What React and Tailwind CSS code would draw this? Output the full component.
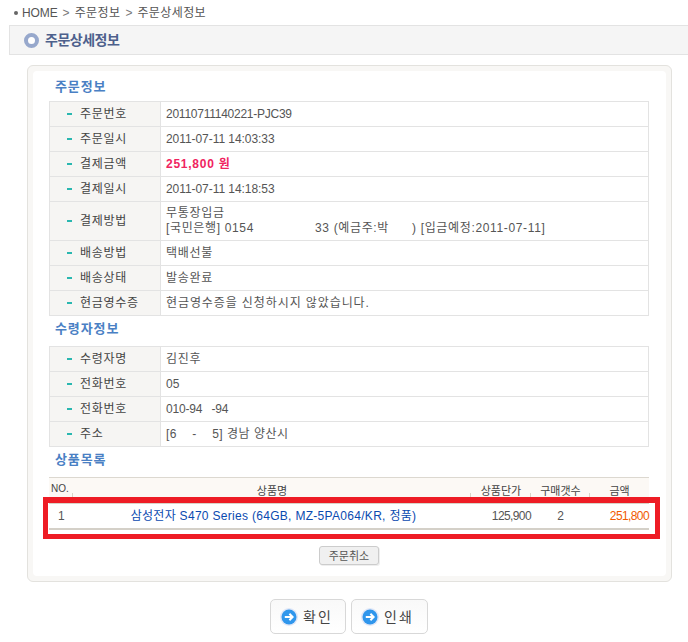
const FF = "font-['Liberation_Sans','Noto_Sans_CJK_KR',sans-serif]";

function Row({ label, children, tall }) {
  return (
    <div className={`flex border-b border-[#e3e3e3] ${tall ? "h-[39px]" : "h-[25px]"}`}>
      <div className="w-[111px] shrink-0 flex items-center bg-[#f6f5f3] border-r border-[#e3e3e3] pl-[17px]">
        <span className="w-[5px] h-[2px] bg-[#2ab7b0] mr-[8px]"></span>
        <span className="text-[#444] tracking-[0.7px]">{label}</span>
      </div>
      <div className="flex-1 flex items-center pl-[5px] text-[#555]">{children}</div>
    </div>
  );
}

function Heading({ children, className }) {
  return <div className={`pl-[6px] text-[13px] font-bold text-[#4a80c4] tracking-[0.9px] leading-[16px] ${className}`}>{children}</div>;
}

function Sep() {
  return <span className="absolute right-0 bottom-0 w-px h-[10px] bg-[#d8d4c8]"></span>;
}

function Arrow() {
  return (
    <svg width="18" height="18" viewBox="0 0 18 18" className="shrink-0">
      <circle cx="9" cy="9" r="9" fill="#dfe6f7" />
      <circle cx="9" cy="9" r="7.5" fill="#2f96ec" />
      <path d="M4.8 9H12.4M9.4 5.8L12.6 9L9.4 12.2" fill="none" stroke="#fff" strokeWidth="2" />
    </svg>
  );
}

function BigButton({ label, className }) {
  return (
    <div className={`h-[35px] flex items-center pl-[9px] gap-[5px] rounded-[5px] border border-[#d8d8d8] bg-gradient-to-b from-[#f9f9f9] to-[#ffffff] text-[14px] text-[#444] tracking-[2px] ${className}`}>
      <Arrow />
      <span>{label}</span>
    </div>
  );
}

export default function App() {
  return (
    <div className={`relative w-[688px] h-[642px] overflow-hidden bg-white text-[12px] leading-[14px] ${FF}`}>
      <div className="h-[25px] flex items-center pl-[14px] text-[#555]">
        <span className="w-[4px] h-[4px] rounded-full bg-[#666] mr-[4px]"></span>
        <span className="tracking-[-0.1px]">HOME</span>
        <span className="mx-[5px] text-[#777]">&gt;</span>
        <span className="tracking-[0.4px]">주문정보</span>
        <span className="mx-[5px] text-[#777]">&gt;</span>
        <span className="tracking-[0.4px]">주문상세정보</span>
      </div>

      <div className="ml-[9px] h-[30px] flex items-center pl-[14px] gap-[6px] bg-[#f5f5f5] border border-r-0 border-[#e3e3e3]">
        <span className="w-[15px] h-[15px] rounded-full border-[4px] border-[#97a8cc] bg-white"></span>
        <span className="text-[14px] font-bold text-[#4d608c] tracking-[-0.5px]">주문상세정보</span>
      </div>

      <div className="ml-[27px] mt-[10px] w-[645px] h-[517px] rounded-[6px] border border-[#e3e2de] bg-[#f8f7f5] p-[5px]">
        <div className="h-full rounded-[4px] bg-white px-[16px]">
          <Heading className="pt-[8px] h-[30px]">주문정보</Heading>
          <div className="w-[600px] border-t border-x border-[#e3e3e3]">
            <Row label="주문번호"><span className="tracking-[-0.25px]">20110711140221-PJC39</span></Row>
            <Row label="주문일시"><span className="tracking-[-0.06px]">2011-07-11 14:03:33</span></Row>
            <Row label="결제금액"><span className="font-bold text-[#f0245f] tracking-[0.75px]">251,800 원</span></Row>
            <Row label="결제일시"><span className="tracking-[-0.06px]">2011-07-11 14:18:53</span></Row>
            <Row label="결제방법" tall>
              <div className="leading-[15px]">
                <div className="tracking-[0.7px]">무통장입금</div>
                <div className="flex tracking-[0.65px]">
                  <span>[국민은행] 0154</span>
                  <span className="ml-[61px]">33 (예금주:박</span>
                  <span className="ml-[23px]">) [입금예정:2011-07-11]</span>
                </div>
              </div>
            </Row>
            <Row label="배송방법"><span className="tracking-[0.7px]">택배선불</span></Row>
            <Row label="배송상태"><span className="tracking-[0.7px]">발송완료</span></Row>
            <Row label="현금영수증"><span className="tracking-[0.9px]">현금영수증을 신청하시지 않았습니다.</span></Row>
          </div>

          <Heading className="pt-[5px] h-[30px]">수령자정보</Heading>
          <div className="w-[600px] border-t border-x border-[#e3e3e3]">
            <Row label="수령자명"><span className="tracking-[0.7px]">김진후</span></Row>
            <Row label="전화번호">05</Row>
            <Row label="전화번호"><span className="whitespace-pre tracking-[-0.2px]">010-94   -94</span></Row>
            <Row label="주소"><span className="whitespace-pre tracking-[0.5px]">[6    -    5] 경남 양산시</span></Row>
          </div>

          <Heading className="pt-[5px] h-[30px]">상품목록</Heading>
          <div className="w-[600px]">
            <div className="flex h-[26px] border-t border-[#dcd8d0] bg-[#fcf9f5] text-[11px] text-[#444] text-center">
              <div className="relative w-[24px] flex items-center pl-[2px] pb-[4px] text-[10px]">NO.<Sep /></div>
              <div className="relative w-[398px] flex items-center justify-center">상품명<Sep /></div>
              <div className="relative w-[60px] flex items-center justify-center">상품단가<Sep /></div>
              <div className="relative w-[59px] flex items-center justify-center">구매갯수<Sep /></div>
              <div className="flex-1 flex items-center justify-center">금액</div>
            </div>
            <div className="flex h-[25px] items-center border-t border-[#d8d4c8] text-[#555]">
              <div className="w-[24px] pl-[9px]">1</div>
              <div className="w-[398px] pl-[3px] text-center text-[#0a4ab0] tracking-[0.3px]">삼성전자 S470 Series (64GB, MZ-5PA064/KR, 정품)</div>
              <div className="w-[60px] text-right tracking-[-0.6px]">125,900</div>
              <div className="w-[59px] text-center">2</div>
              <div className="flex-1 text-right text-[#f15a00] tracking-[-0.6px]">251,800</div>
            </div>
            <div className="h-[2px] bg-[#d4d0c8]"></div>
          </div>

          <div className="mt-[16px] flex justify-center pr-[1px]">
            <div className="w-[60px] h-[19px] flex items-center justify-center rounded-[3px] border border-[#cccccc] bg-[#f0f0f0] text-[11px] text-[#555] shadow-[1px_1px_0_#eeeeee]">주문취소</div>
          </div>
        </div>
      </div>

      <div className="mt-[17px] ml-[270px] flex gap-[5px]">
        <BigButton label="확인" className="w-[76px]" />
        <BigButton label="인쇄" className="w-[77px]" />
      </div>

      <div className="absolute left-[43px] top-[497px] w-[617px] h-[42px] border-[5px] border-t-[6px] border-[#ee1c25]"></div>
    </div>
  );
}
